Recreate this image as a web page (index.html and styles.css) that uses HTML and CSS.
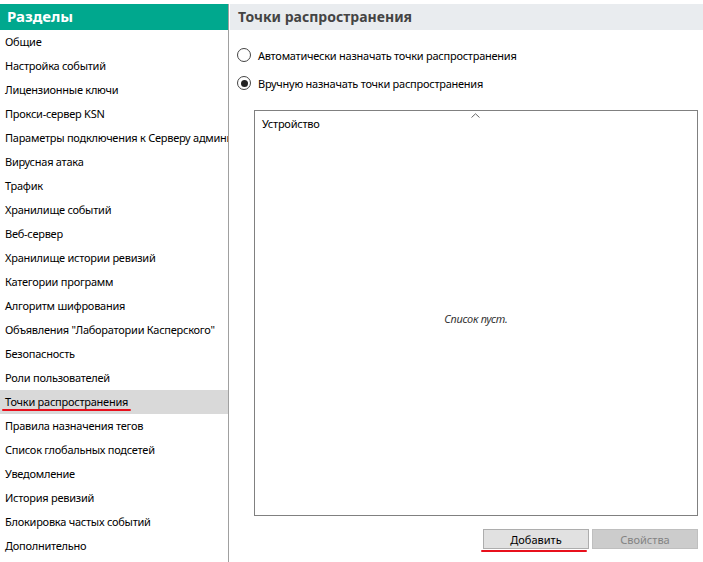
FILE: index.html
```html
<!DOCTYPE html>
<html lang="ru">
<head>
  <meta charset="UTF-8">
  <title>Точки распространения</title>
  <link rel="stylesheet" href="styles.css">
</head>
<body>
  <div class="window">
    <!-- Sections -->
    <div class="sidebar">
      <div class="sidebar-title">Разделы</div>
      <ul class="sections">
        <li>Общие</li>
        <li>Настройка событий</li>
        <li>Лицензионные ключи</li>
        <li>Прокси-сервер KSN</li>
        <li>Параметры подключения к Серверу администрирования</li>
        <li>Вирусная атака</li>
        <li>Трафик</li>
        <li>Хранилище событий</li>
        <li>Веб-сервер</li>
        <li>Хранилище истории ревизий</li>
        <li>Категории программ</li>
        <li>Алгоритм шифрования</li>
        <li>Объявления "Лаборатории Касперского"</li>
        <li>Безопасность</li>
        <li>Роли пользователей</li>
        <li class="selected"><span class="marked">Точки распространения</span></li>
        <li>Правила назначения тегов</li>
        <li>Список глобальных подсетей</li>
        <li>Уведомление</li>
        <li>История ревизий</li>
        <li>Блокировка частых событий</li>
        <li>Дополнительно</li>
      </ul>
    </div>

    <!-- Content -->
    <div class="content">
      <div class="content-title">Точки распространения</div>
      <div class="content-body">
        <label class="radio"><span class="radio-mark"></span>Автоматически назначать точки распространения</label>
        <label class="radio"><span class="radio-mark checked"></span>Вручную назначать точки распространения</label>

        <div class="listbox">
          <div class="list-header">
            <span class="col">Устройство</span>
            <svg class="sort" width="9" height="5" viewBox="0 0 9 5"><path d="M0.5 4.5 L4.5 0.8 L8.5 4.5" fill="none" stroke="#666" stroke-width="1"/></svg>
          </div>
          <div class="list-empty">Список пуст.</div>
        </div>

        <div class="buttons">
          <button class="btn marked-btn">Добавить</button>
          <button class="btn" disabled>Свойства</button>
        </div>
      </div>
    </div>
  </div>
</body>
</html>
```

FILE: styles.css
```css
body {
  margin: 0;
  font-family: "Noto Sans", "Liberation Sans", sans-serif;
  font-size: 11px;
  letter-spacing: -0.25px;
  color: #000;
  background: #fff;
}
.window {
  display: flex;
  height: 562px;
  padding-top: 4px;
  box-sizing: border-box;
  overflow: hidden;
}
.sidebar {
  width: 228px;
  flex-shrink: 0;
  border-right: 1px solid #a0a0a0;
  overflow: hidden;
}
.sidebar-title {
  height: 26px;
  line-height: 25px;
  background: #00a88e;
  color: #fff;
  font-weight: bold;
  font-size: 15px;
  letter-spacing: 0;
  padding-left: 7px;
}
.sections {
  list-style: none;
  margin: 0;
  padding: 0;
}
.sections li {
  height: 24px;
  line-height: 24px;
  padding-left: 5px;
  white-space: nowrap;
}
.sections li.selected {
  background: #d9d9d9;
}
.marked {
  display: inline-block;
  position: relative;
}
.marked::after {
  content: "";
  position: absolute;
  left: -3px;
  right: -3px;
  bottom: 3px;
  height: 2px;
  border-radius: 1px;
  background: #e8101c;
}
.content {
  flex: 1;
  display: flex;
  flex-direction: column;
  margin-left: 1px;
}
.content-title {
  height: 26px;
  line-height: 26px;
  background: #e9ecef;
  color: #444;
  font-weight: bold;
  font-size: 14px;
  letter-spacing: 0;
  padding-left: 8px;
}
.content-body {
  flex: 1;
  display: flex;
  flex-direction: column;
  padding: 17px 5px 10px 7px;
}
.radio {
  display: flex;
  align-items: center;
  height: 16px;
  margin-bottom: 12px;
}
.radio-mark {
  width: 12px;
  height: 12px;
  border: 1px solid #444;
  border-radius: 50%;
  margin-right: 7px;
  box-sizing: content-box;
  position: relative;
}
.radio-mark.checked::after {
  content: "";
  position: absolute;
  left: 2.5px;
  top: 2.5px;
  width: 7px;
  height: 7px;
  border-radius: 50%;
  background: #222;
}
.listbox {
  margin: 7px 0 0 17px;
  height: 404px;
  border: 1px solid #808080;
  display: flex;
  flex-direction: column;
}
.list-header {
  height: 28px;
  position: relative;
  padding-left: 7px;
  line-height: 26px;
}
.sort {
  position: absolute;
  left: 216px;
  top: 2px;
}
.list-empty {
  flex: 1;
  display: flex;
  align-items: center;
  justify-content: center;
  font-style: italic;
  color: #333;
  padding-bottom: 18px;
}
.buttons {
  display: flex;
  justify-content: flex-end;
  gap: 3px;
  margin-top: 13px;
}
.btn {
  width: 106px;
  height: 20px;
  font-family: inherit;
  font-size: 11px;
  background: #e1e1e1;
  border: 1px solid #adadad;
  color: #000;
  padding: 0;
}
.btn[disabled] {
  background: #cccccc;
  border-color: #bfbfbf;
  color: #838383;
}
.marked-btn {
  position: relative;
}
.marked-btn::after {
  content: "";
  position: absolute;
  left: -3px;
  right: 1px;
  bottom: -4px;
  height: 2px;
  border-radius: 1px;
  background: #e8101c;
}
```
